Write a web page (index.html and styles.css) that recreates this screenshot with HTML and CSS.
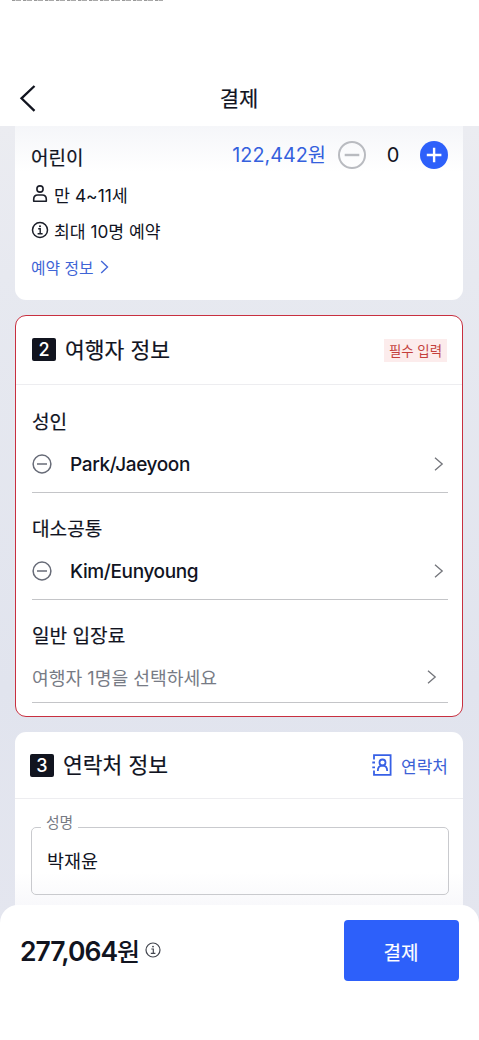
FILE: index.html
```html
<!DOCTYPE html>
<html lang="ko">
<head>
<meta charset="utf-8">
<title>결제</title>
<link rel="stylesheet" href="styles.css">
</head>
<body>
<div class="screen">
  <header class="topbar">
    <div class="clipped-line"></div>
    <div class="nav">
      <svg class="back" width="20" height="30" viewBox="0 0 20 30" fill="none" stroke="#11141f" stroke-width="2.3"><path d="M15.5 3 2.5 15.3 15.5 27.8"/></svg>
      <h1 class="title">결제</h1>
      <span class="nav-end"></span>
    </div>
  </header>

  <main class="content">
    <section class="card ticket">
      <div class="ticket-row">
        <h2 class="ticket-name">어린이</h2>
        <span class="price">122,442원</span>
        <svg class="minus" width="28" height="28" viewBox="0 0 28 28" fill="none" stroke="#b9bbc0"><circle cx="14" cy="14" r="13" stroke-width="2"/><path d="M6.7 14h14.6" stroke-width="2.4"/></svg>
        <span class="count">0</span>
        <svg class="plus" width="28" height="28" viewBox="0 0 28 28"><circle cx="14" cy="14" r="14" fill="#2d60fa"/><path d="M6.8 14h14.6M14.1 6.7v14.6" stroke="#fff" stroke-width="2.4"/></svg>
      </div>
      <div class="info age">
        <svg width="18" height="18" viewBox="0 0 18 18" fill="none" stroke="#1b1e29" stroke-width="1.6"><circle cx="9" cy="4" r="3.1"/><path d="M2.700 16.200v-1.900C2.700 11.700 4.300 10 6.800 10h4.400c2.500 0 4.100 1.700 4.100 4.300v1.900z" stroke-linejoin="round"/></svg>
        <span>만 4~11세</span>
      </div>
      <div class="info limit">
        <svg width="18" height="18" viewBox="0 0 18 18" fill="none" stroke="#1b1e29"><circle cx="9" cy="9" r="7.500" stroke-width="1.5"/><path d="M7.200 7.800h2v5M6.600 12.800h5" stroke-width="1.400"/><circle cx="9" cy="5.200" r="1" fill="#1b1e29" stroke="none"/></svg>
        <span>최대 10명 예약</span>
      </div>
      <div class="info link">
        <span>예약 정보</span>
        <svg width="9" height="14" viewBox="0 0 9 14" fill="none" stroke="#4468d8" stroke-width="1.400"><path d="M1.200 1 7.500 7 1.200 13"/></svg>
      </div>
    </section>

    <section class="card travelers">
      <div class="card-head">
        <span class="step">2</span>
        <h2 class="head-text">여행자 정보</h2>
        <span class="badge">필수 입력</span>
      </div>
      <div class="group first">
        <h3 class="group-name">성인</h3>
        <div class="person">
          <svg width="20" height="20" viewBox="0 0 20 20" fill="none" stroke="#676b77" stroke-width="1.500"><circle cx="10" cy="10" r="8.900"/><path d="M5 10h10"/></svg>
          <span class="person-name">Park/Jaeyoon</span>
          <svg width="10" height="14" viewBox="0 0 10 14" fill="none" stroke="#73757b" stroke-width="1.300"><path d="M1 .8 8.200 7 1 13.200"/></svg>
        </div>
      </div>
      <div class="group">
        <h3 class="group-name">대소공통</h3>
        <div class="person">
          <svg width="20" height="20" viewBox="0 0 20 20" fill="none" stroke="#676b77" stroke-width="1.500"><circle cx="10" cy="10" r="8.900"/><path d="M5 10h10"/></svg>
          <span class="person-name">Kim/Eunyoung</span>
          <svg width="10" height="14" viewBox="0 0 10 14" fill="none" stroke="#73757b" stroke-width="1.300"><path d="M1 .8 8.200 7 1 13.200"/></svg>
        </div>
      </div>
      <div class="group last">
        <h3 class="group-name">일반 입장료</h3>
        <div class="person empty">
          <span class="placeholder">여행자 1명을 선택하세요</span>
          <svg width="10" height="14" viewBox="0 0 10 14" fill="none" stroke="#73757b" stroke-width="1.300"><path d="M1 .8 8.200 7 1 13.200"/></svg>
        </div>
      </div>
    </section>

    <section class="card contact">
      <div class="card-head contact-head">
        <span class="step">3</span>
        <h2 class="head-text">연락처 정보</h2>
        <svg class="book" width="20" height="22" viewBox="0 0 20 22" fill="none" stroke="#3760e6" stroke-width="1.800"><path d="M2 5.500V1.200h16.600v19.600H2v-4.300M.3 8.500h2.700M.3 13.400h2.700"/><circle cx="10.500" cy="8.500" r="3"/><path d="M5.800 17c0-3.200 1.900-5.300 4.700-5.300s4.700 2.100 4.700 5.300"/></svg>
        <span class="contact-link">연락처</span>
      </div>
      <fieldset class="field">
        <legend class="field-label"><span class="field-label-text">성명</span></legend>
        <div class="field-value">박재윤</div>
      </fieldset>
    </section>
  </main>

  <footer class="paybar">
    <strong class="total">277,064<span class="won">원</span></strong>
    <svg class="total-info" width="16" height="16" viewBox="0 0 16 16" fill="none" stroke="#42454e"><circle cx="8" cy="8" r="7" stroke-width="1.200"/><path d="M6.300 7h2v4.300M5.800 11.400h4.600" stroke-width="1.200"/><circle cx="8" cy="4.600" r=".9" fill="#42454e" stroke="none"/></svg>
    <button class="pay" type="button">결제</button>
  </footer>
</div>
</body>
</html>
```

FILE: styles.css
```css
* { box-sizing: border-box; }
body {
  margin: 0;
  background: #fff;
  color: #11141f;
  font-family: Inter, "Noto Sans CJK KR", sans-serif;
}
h1, h2, h3 { margin: 0; font-weight: 400; -webkit-text-stroke: 0.2px currentColor; }
svg { display: block; flex: none; }
span, h1, h2, h3, strong { white-space: nowrap; }

.screen {
  width: 479px;
  height: 1040px;
  overflow: hidden;
  display: flex;
  flex-direction: column;
}
.topbar { flex: none; height: 126px; background: #fff; }
.clipped-line {
  width: 151px;
  height: 1px;
  margin-left: 12px;
  background: repeating-linear-gradient(90deg, #999 0 3px, #ddd 3px 4px, #aaa 4px 9px, #fff 9px 11px);
}
.nav {
  height: 56px;
  margin-top: 69px;
  padding: 0 20px 0 19px;
  display: flex;
  align-items: center;
  justify-content: space-between;
}
.nav-end { width: 20px; }
.title { font-size: 21px; line-height: 30px; padding-top: 1px; }

.content {
  flex: none;
  height: 798px;
  padding: 0 16px 0 15px;
  overflow: hidden;
  background: linear-gradient(180deg, #ebecf1 0, #e7e9f0 150px, #e1e4ee 560px, #e4e6ef 100%);
}
.card { background: #fff; border-radius: 11px; }

.ticket {
  height: 174px;
  padding: 14px 16px 0;
  border-radius: 0 0 11px 11px;
  background: linear-gradient(180deg, #f5f6f9 0, #fff 46px);
}
.ticket-row { height: 29px; display: flex; align-items: center; }
.ticket-name { font-size: 19px; line-height: 28px; margin-top: 8px; flex: 1; }
.price { color: #3460dd; font-size: 19.800px; line-height: 28px; margin-right: 12px; }
.count { width: 54px; text-align: center; font-size: 20px; line-height: 28px; color: #11141f; }
.plus { margin-right: -1px; }
.info { display: flex; align-items: center; height: 36px; font-size: 17.400px; }
.info svg + span { margin-left: 5px; }
.age { margin-top: 7px; }
.limit { margin-bottom: 1px; }
.limit span { font-size: 17.200px; }
.link { color: #3f65d6; font-size: 15.800px; }
.link svg { margin-left: 6px; }

.travelers {
  height: 402px;
  margin-top: 15px;
  border: 1px solid #c83040;
}
.card-head {
  display: flex;
  align-items: center;
  height: 69px;
  padding: 0 15px 1px 16px;
  border-bottom: 1px solid #ededf0;
}
.step {
  width: 24px;
  height: 23px;
  border-radius: 2px;
  background: #11141f;
  color: #fff;
  font-size: 18px;
  font-weight: 500;
  line-height: 23px;
  text-align: center;
}
.head-text { margin-left: 9px; font-size: 21.500px; line-height: 32px; flex: 1; }
.badge {
  width: 63px;
  height: 23px;
  margin-top: 2px;
  background: #fcecec;
  color: #c4403c;
  font-size: 13.400px;
  line-height: 24px;
  text-align: center;
}
.group {
  height: 107px;
  margin: 0 14px 0 16px;
  padding-top: 21px;
  border-bottom: 1px solid #c4c5c8;
}
.first { height: 108px; padding-top: 22px; }
.last { height: 103px; }
.group-name { font-size: 19.100px; line-height: 30px; }
.person { display: flex; align-items: center; height: 54px; padding: 0 4px 0 0; }
.person-name { flex: 1; margin-left: 18px; font-size: 19px; font-weight: 500; letter-spacing: -0.370px; }
.empty { height: 51px; padding: 0 11px 0 0; }
.placeholder { flex: 1; color: #777b85; font-size: 18.200px; }

.contact { height: 200px; margin-top: 15px; background: linear-gradient(180deg, #fff 140px, #f8f8fb 175px); }
.contact-head { height: 67px; padding: 0 15px; }
.book { margin-right: 9px; }
.contact-link { color: #3c61d6; font-size: 17px; }
.field {
  height: 78px;
  margin: 18px 14px 0 16px;
  padding: 0 0 0 15px;
  border: 1px solid #c9cace;
  border-radius: 5px;
  min-width: 0;
}
.field-label { margin-left: -6px; padding: 0 5px; color: #777b85; font-size: 14.800px; line-height: 20px; }
.field-label-text { display: block; transform: translateY(-4px); }
.field-value { font-size: 18.500px; line-height: 28px; margin-top: 10px; }

.paybar {
  position: relative;
  flex: none;
  height: 135px;
  margin-top: -19px;
  padding: 15px 20px 0;
  display: flex;
  align-items: flex-start;
  border-radius: 18px 18px 0 0;
  background: #fff;
}
.total { font-size: 26.500px; font-weight: 600; line-height: 62px; letter-spacing: -1px; }
.won { font-weight: 500; font-size: 25px; letter-spacing: 0; }
.total-info { margin: 22px auto 0 5px; }
.pay {
  width: 115px;
  height: 61px;
  padding: 2px 1px 0 0;
  border: 0;
  border-radius: 4px;
  background: #2d60fa;
  color: #fff;
  font-family: Inter, "Noto Sans CJK KR", sans-serif;
  font-size: 19px;
  -webkit-text-stroke: 0.2px currentColor;
}
```
